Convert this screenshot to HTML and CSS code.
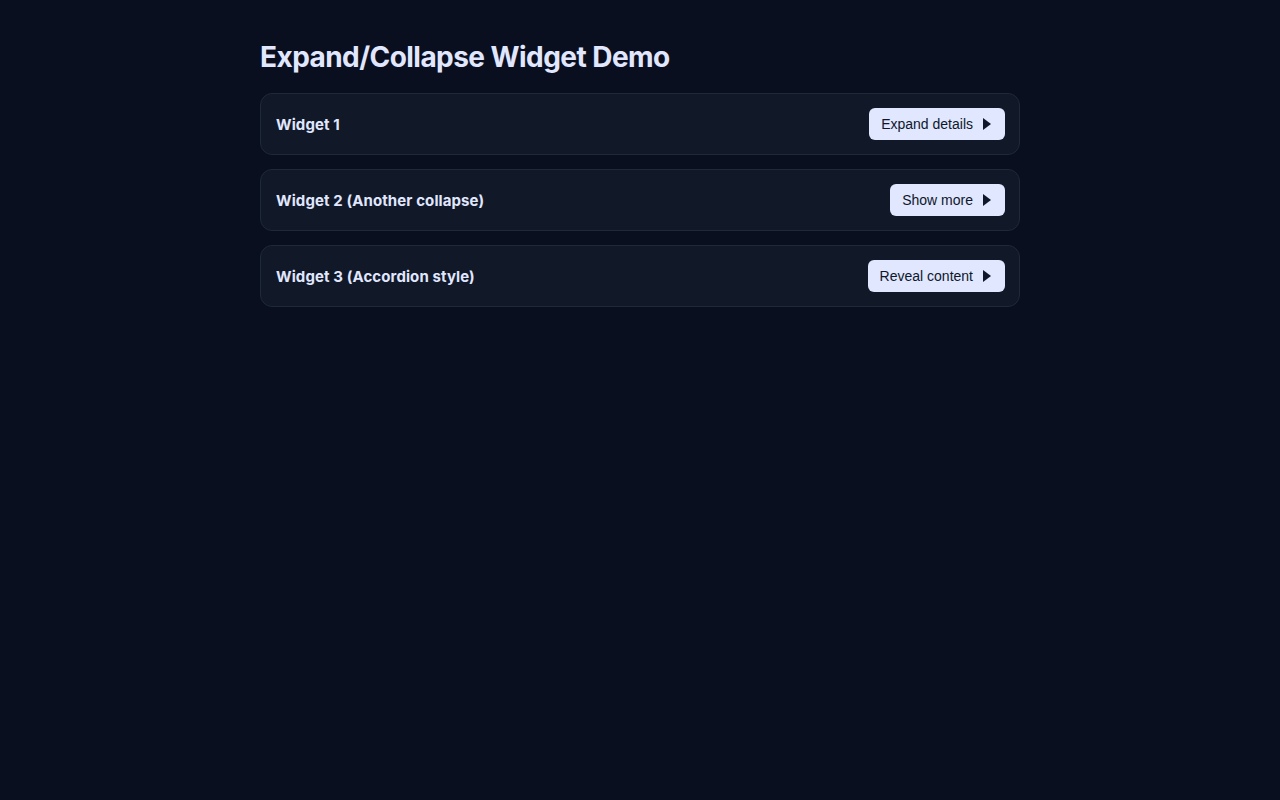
FILE: index.html
```html
<!DOCTYPE html>
<html lang="en">
<head>
<meta charset="utf-8">
<title>Expand/Collapse Widget Demo</title>
<link rel="stylesheet" href="styles.css">
</head>
<body>
<main class="page">
  <h1 class="title">Expand/Collapse Widget Demo</h1>
  <div class="list">
    <section class="widget">
      <span class="label">Widget 1</span>
      <button class="toggle" type="button">Expand details<svg class="caret" viewBox="0 0 8 12" width="8" height="12"><path d="M0 0 L8 6 L0 12 Z"/></svg></button>
    </section>
    <section class="widget">
      <span class="label">Widget 2 (Another collapse)</span>
      <button class="toggle" type="button">Show more<svg class="caret" viewBox="0 0 8 12" width="8" height="12"><path d="M0 0 L8 6 L0 12 Z"/></svg></button>
    </section>
    <section class="widget">
      <span class="label">Widget 3 (Accordion style)</span>
      <button class="toggle" type="button">Reveal content<svg class="caret" viewBox="0 0 8 12" width="8" height="12"><path d="M0 0 L8 6 L0 12 Z"/></svg></button>
    </section>
  </div>
</main>
</body>
</html>
```
FILE: styles.css
```css
html, body {
  margin: 0;
  padding: 0;
  background: #0a0f1f;
}
body {
  font-family: Inter, "Noto Sans", sans-serif;
  color: #e0e7ff;
  min-height: 800px;
}
.page {
  width: 760px;
  margin: 0 auto;
  padding-top: 40px;
}
.title {
  margin: 0 0 19px 0;
  font-size: 28px;
  line-height: 34px;
  font-weight: 700;
  color: #e0e7ff;
  letter-spacing: -0.55px;
}
.list {
  display: flex;
  flex-direction: column;
  gap: 14px;
}
.widget {
  display: flex;
  align-items: center;
  justify-content: space-between;
  padding: 14px 14px 14px 15px;
  background: #111827;
  border: 1px solid #1f2937;
  border-radius: 12px;
}
.label {
  font-size: 15px;
  font-weight: 700;
  color: #e0e7ff;
  letter-spacing: 0.1px;
}
.toggle {
  display: flex;
  align-items: center;
  height: 32px;
  padding: 0 14px 0 12px;
  border: none;
  border-radius: 6px;
  background: #e0e7ff;
  color: #0f172a;
  font-family: "Liberation Sans", Arial, sans-serif;
  font-size: 14px;
}
.caret {
  margin-left: 10px;
  fill: #0f172a;
}
```
